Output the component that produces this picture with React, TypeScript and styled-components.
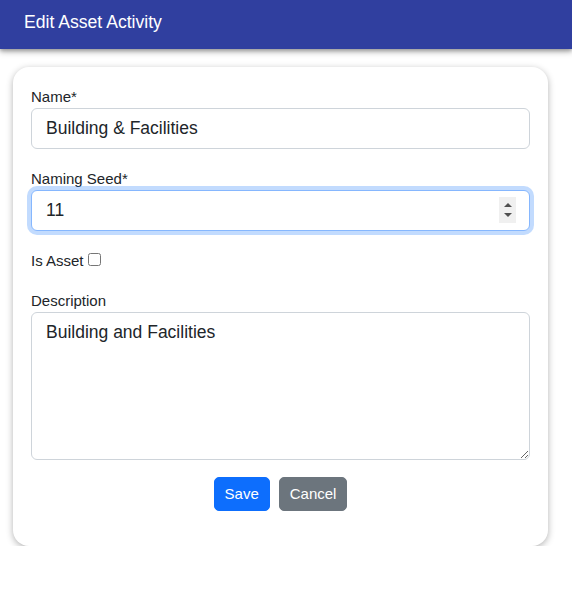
import React from 'react'
import styled, { createGlobalStyle } from 'styled-components'

const GlobalStyle = createGlobalStyle`
  html, body {
    margin: 0;
    padding: 0;
    background: #ffffff;
    font-family: "Liberation Sans", Arial, sans-serif;
    color: #212529;
  }

  * {
    box-sizing: border-box;
  }
`

const HeaderStyled = styled.header`
  position: relative;
  z-index: 2;
  height: 49px;
  padding: 12px 24px 16px;
  background-color: #303f9f;
  box-shadow: 0 3px 6px rgba(0, 0, 0, 0.28), 0 2px 3px rgba(0, 0, 0, 0.18);
`

const TitleStyled = styled.h1`
  margin: 0;
  font-size: 17.6px;
  font-weight: normal;
  line-height: 21px;
  color: #ffffff;
`

const CardStyled = styled.form`
  width: 535px;
  margin: 18px 0 0 13px;
  padding: 19px 18px 18px;
  background-color: #ffffff;
  border-radius: 16px;
  box-shadow: 0 2px 7px rgba(0, 0, 0, 0.3);
`

const FieldStyled = styled.div`
  display: flex;
  flex-direction: column;
  margin-bottom: 19px;
`

const LabelStyled = styled.label`
  font-size: 15px;
  line-height: 21px;
  margin-bottom: 1px;
`

const InputWrapStyled = styled.div`
  position: relative;
`

const InputStyled = styled.input<{ $focused?: boolean }>`
  width: 100%;
  height: 41px;
  padding: 6px 14px;
  font-family: inherit;
  font-size: 17.5px;
  line-height: 27px;
  color: #212529;
  background-color: #ffffff;
  border: 1px solid ${(props) => (props.$focused ? '#86b7fe' : '#ced4da')};
  border-radius: 6px;
  outline: none;
  box-shadow: ${(props) => (props.$focused ? '0 0 0 4px rgba(13, 110, 253, 0.25)' : 'none')};
  appearance: textfield;

  &::-webkit-inner-spin-button,
  &::-webkit-outer-spin-button {
    -webkit-appearance: none;
    margin: 0;
  }
`

const SpinnerStyled = styled.div`
  position: absolute;
  top: 7px;
  right: 14px;
  width: 17px;
  height: 26px;
  display: flex;
  flex-direction: column;
  align-items: center;
  justify-content: center;
  gap: 6px;
  background-color: #f0f0f0;
`

const ArrowStyled = styled.span<{ $dir: 'up' | 'down' }>`
  width: 0;
  height: 0;
  border-left: 4px solid transparent;
  border-right: 4px solid transparent;
  ${(props) =>
    props.$dir === 'up' ? 'border-bottom: 4px solid #505050;' : 'border-top: 4px solid #505050;'}
`

const TextAreaStyled = styled.textarea`
  width: 100%;
  height: 148px;
  padding: 6px 14px;
  font-family: inherit;
  font-size: 17.5px;
  line-height: 27px;
  color: #212529;
  border: 1px solid #ced4da;
  border-radius: 6px;
  outline: none;
  resize: vertical;
`

const CheckRowStyled = styled.div`
  font-size: 15px;
  line-height: 21px;
  margin-bottom: 19px;

  > input {
    width: 13px;
    height: 13px;
    margin: 0;
    vertical-align: 0px;
  }
`

const ActionsStyled = styled.div`
  display: flex;
  justify-content: center;
  gap: 9px;
  margin-top: -2px;
  margin-bottom: 17px;
`

const ButtonStyled = styled.button<{ $variant: 'primary' | 'secondary' }>`
  height: 34px;
  padding: 5px 10px;
  font-family: inherit;
  font-size: 15px;
  line-height: 22px;
  color: #ffffff;
  background-color: ${(props) => (props.$variant === 'primary' ? '#0d6efd' : '#6c757d')};
  border: 1px solid ${(props) => (props.$variant === 'primary' ? '#0d6efd' : '#6c757d')};
  border-radius: 5px;
  cursor: pointer;
`

export default function App() {
  return (
    <>
      <GlobalStyle />
      <HeaderStyled>
        <TitleStyled>Edit Asset Activity</TitleStyled>
      </HeaderStyled>

      <CardStyled onSubmit={(e) => e.preventDefault()}>
        <FieldStyled>
          <LabelStyled htmlFor="name">Name*</LabelStyled>
          <InputStyled id="name" type="text" defaultValue="Building & Facilities" />
        </FieldStyled>

        <FieldStyled>
          <LabelStyled htmlFor="seed">Naming Seed*</LabelStyled>
          <InputWrapStyled>
            <InputStyled id="seed" type="number" defaultValue={11} $focused />
            <SpinnerStyled>
              <ArrowStyled $dir="up" />
              <ArrowStyled $dir="down" />
            </SpinnerStyled>
          </InputWrapStyled>
        </FieldStyled>

        <CheckRowStyled>
          Is Asset <input type="checkbox" />
        </CheckRowStyled>

        <FieldStyled>
          <LabelStyled htmlFor="description">Description</LabelStyled>
          <TextAreaStyled id="description" defaultValue="Building and Facilities" />
        </FieldStyled>

        <ActionsStyled>
          <ButtonStyled type="submit" $variant="primary">Save</ButtonStyled>
          <ButtonStyled type="button" $variant="secondary">Cancel</ButtonStyled>
        </ActionsStyled>
      </CardStyled>
    </>
  )
}
